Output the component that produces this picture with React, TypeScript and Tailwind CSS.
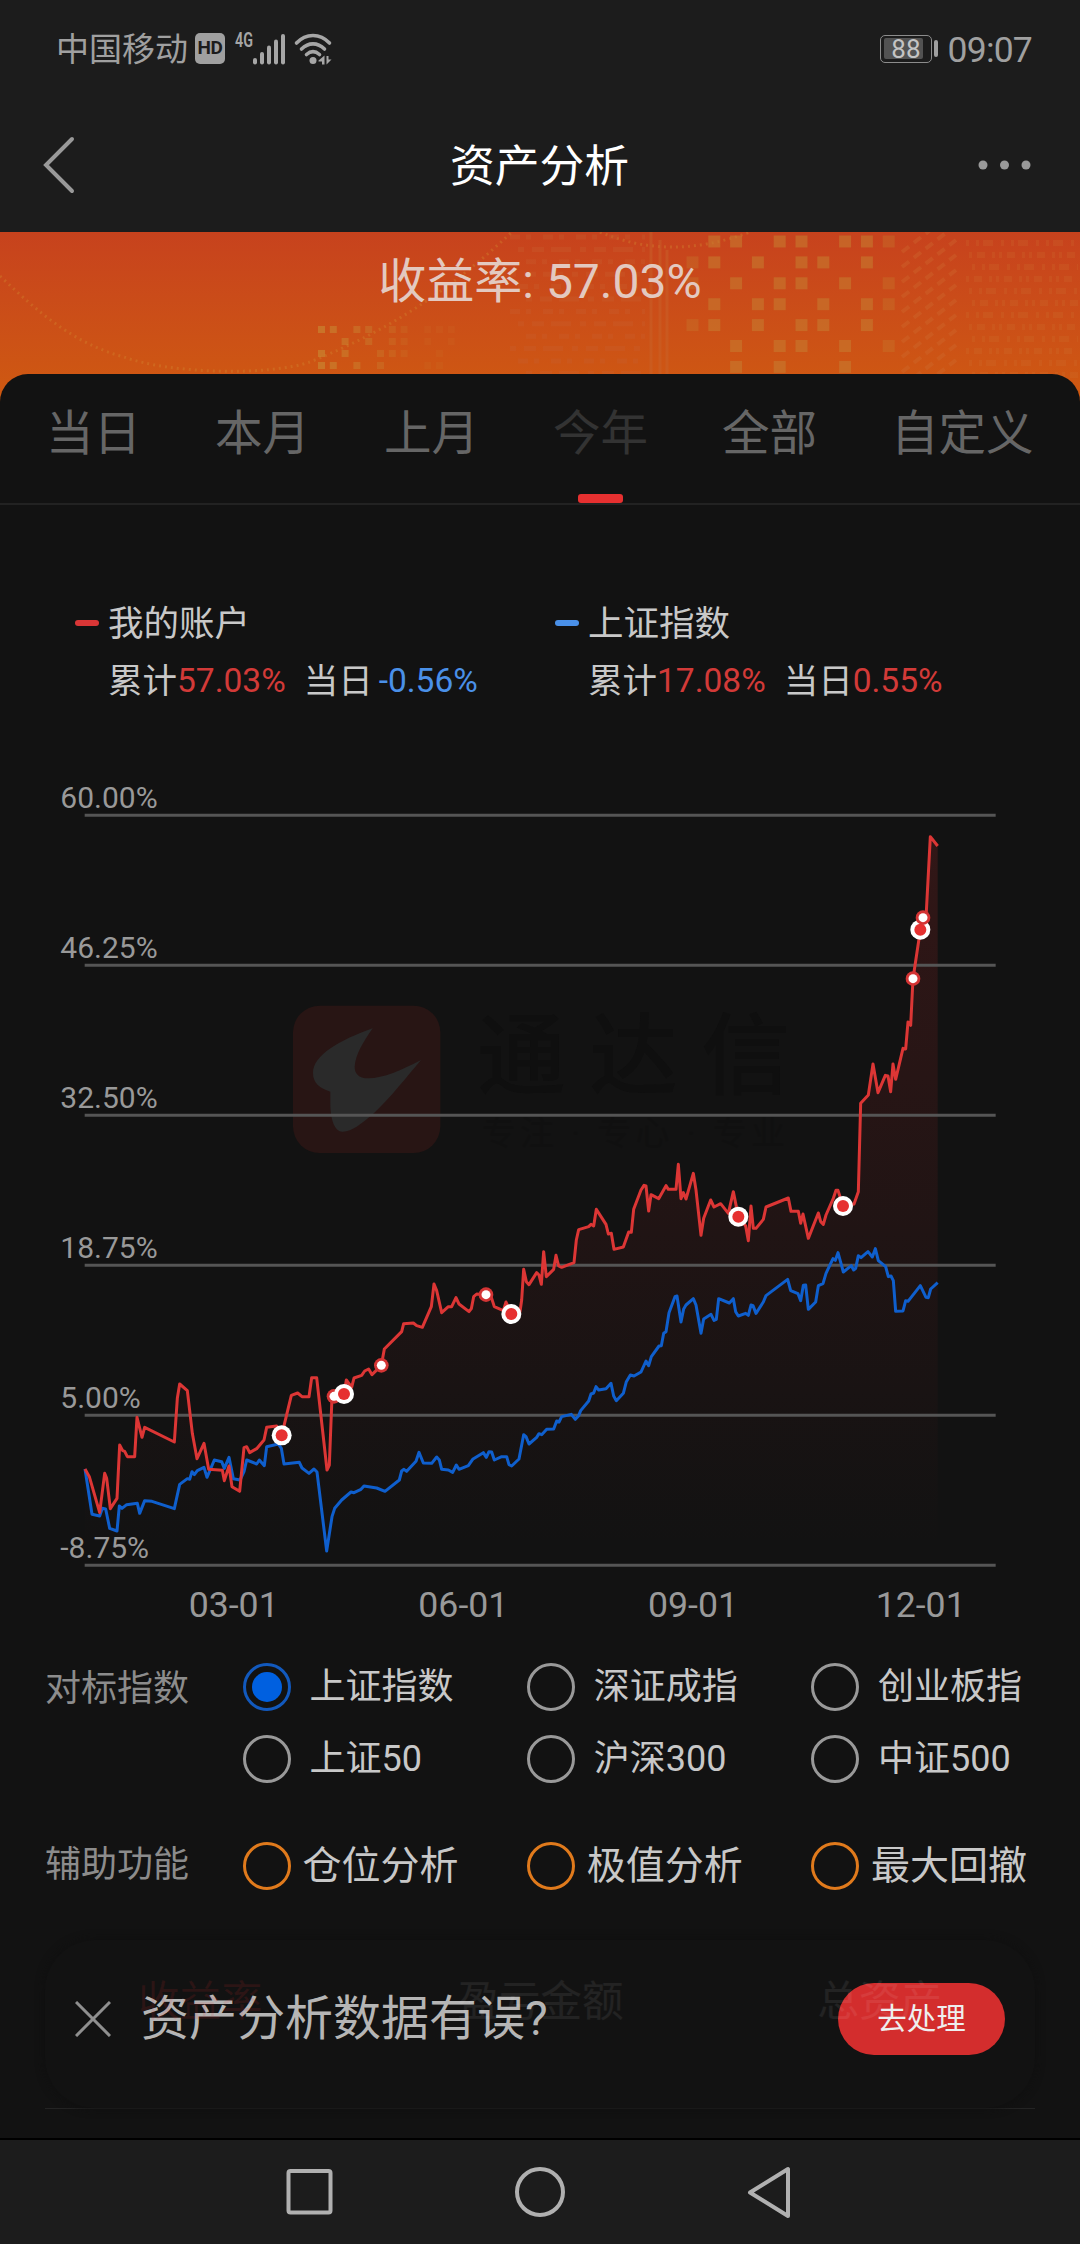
import clsx from 'clsx';

const tabs = ['当日', '本月', '上月', '今年', '全部', '自定义'];

const legends = [
  { name: '我的账户', dash: 'bg-[#d93636]', total: '57.03%', day: '-0.56%', dayClass: 'ml-[6px] text-[#4a90e8]' },
  { name: '上证指数', dash: 'bg-[#4a90e8]', total: '17.08%', day: '0.55%', dayClass: 'text-[#d23a38]' },
];

const indexRows = [
  ['上证指数', '深证成指', '创业板指'],
  ['上证50', '沪深300', '中证500'],
];

const helpers = ['仓位分析', '极值分析', '最大回撤'];

const gridLines = [
  { y: 46, label: '60.00%' },
  { y: 496, label: '46.25%' },
  { y: 946, label: '32.50%' },
  { y: 1396, label: '18.75%' },
  { y: 1846, label: '5.00%' },
  { y: 2296, label: '-8.75%' },
];

const dates = [
  { x: 701, label: '03-01' },
  { x: 1390, label: '06-01' },
  { x: 2079, label: '09-01' },
  { x: 2762, label: '12-01' },
];

// three units per css pixel
const account =
  '255,2007 268,2030 299,2138 314,2020 320,2035 331,2126 351,2095 359,1935 368,1952 374,1954 382,1970 404,1970 411,1852 426,1912 434,1882 523,1926 532,1795 539,1752 562,1772 577,1900 591,1976 612,1930 626,2008 667,2011 673,2042 687,1998 696,2060 719,2074 732,1943 740,1940 749,1958 770,1946 792,1920 800,1882 830,1878 845,1906 874,1786 893,1779 906,1790 927,1790 935,1733 950,1733 981,2010 988,1995 996,1790 1032,1782 1039,1740 1055,1762 1062,1734 1085,1726 1094,1713 1106,1707 1116,1724 1144,1696 1153,1647 1205,1595 1211,1571 1240,1569 1250,1577 1267,1582 1294,1520 1302,1452 1310,1472 1325,1538 1345,1520 1355,1520 1368,1493 1377,1512 1407,1535 1414,1526 1421,1490 1430,1482 1458,1484 1475,1495 1483,1520 1510,1532 1518,1506 1534,1542 1560,1535 1565,1500 1571,1408 1579,1445 1587,1454 1610,1418 1617,1425 1624,1453 1631,1355 1639,1430 1661,1408 1668,1366 1676,1398 1685,1402 1722,1388 1729,1320 1736,1289 1766,1280 1773,1273 1781,1278 1789,1228 1818,1273 1825,1302 1834,1300 1842,1348 1870,1341 1886,1296 1894,1297 1901,1228 1923,1170 1932,1156 1938,1158 1946,1233 1953,1184 1976,1196 1998,1157 2005,1168 2028,1168 2035,1093 2043,1196 2050,1178 2058,1197 2080,1120 2088,1170 2103,1306 2111,1255 2132,1200 2142,1221 2162,1211 2185,1240 2200,1175 2215,1250 2237,1278 2245,1322 2253,1218 2260,1285 2268,1285 2290,1258 2298,1221 2365,1194 2373,1234 2395,1234 2402,1270 2409,1242 2425,1315 2455,1239 2462,1265 2470,1273 2478,1245 2500,1195 2508,1171 2514,1171 2529,1218 2562,1212 2575,1175 2582,910 2605,885 2619,792 2634,878 2656,826 2664,828 2672,875 2679,792 2687,838 2709,745 2717,747 2724,666 2732,676 2739,536 2761,390 2769,353 2779,335 2791,110 2813,138';

const benchmark =
  '255,2007 276,2143 299,2148 307,2125 317,2127 329,2185 351,2193 358,2118 366,2125 380,2114 412,2110 419,2140 434,2102 456,2104 523,2126 539,2053 562,2036 569,2038 576,2015 583,2024 592,2012 612,2002 621,2032 643,1980 665,1985 673,2005 687,1972 700,2036 720,2040 732,2015 740,1980 770,1992 778,1980 793,1997 800,1940 835,1932 844,1945 852,1992 898,1987 906,2004 927,2020 942,2007 951,2016 980,2253 996,2150 1004,2125 1025,2100 1053,2076 1062,2078 1083,2068 1092,2058 1130,2064 1155,2074 1198,2040 1205,2013 1212,2008 1220,2014 1248,1984 1257,1957 1270,1989 1295,1990 1310,1971 1318,1980 1325,2008 1345,2010 1358,2017 1369,1995 1377,2008 1405,1997 1418,1978 1450,1958 1459,1972 1467,1955 1475,1956 1483,1980 1505,1970 1520,1970 1527,1994 1535,1998 1557,1977 1571,1904 1578,1910 1587,1932 1610,1912 1617,1901 1625,1904 1640,1888 1661,1887 1670,1863 1677,1866 1685,1850 1714,1843 1726,1858 1736,1847 1742,1832 1766,1803 1773,1782 1781,1779 1788,1760 1796,1770 1818,1766 1833,1750 1841,1788 1849,1802 1870,1780 1879,1745 1891,1725 1902,1728 1923,1716 1938,1683 1946,1697 1954,1670 1977,1638 1984,1637 1991,1600 1998,1595 2007,1538 2025,1490 2031,1488 2043,1566 2051,1527 2058,1515 2080,1496 2088,1515 2103,1600 2111,1557 2133,1543 2142,1561 2149,1558 2156,1496 2188,1509 2200,1496 2207,1535 2215,1548 2237,1540 2245,1546 2253,1515 2259,1517 2268,1540 2290,1506 2298,1487 2363,1438 2372,1472 2394,1481 2402,1502 2410,1456 2417,1455 2425,1528 2447,1506 2455,1457 2469,1451 2478,1420 2499,1376 2506,1381 2514,1358 2530,1416 2554,1397 2561,1410 2567,1405 2575,1367 2583,1373 2604,1355 2617,1371 2626,1346 2635,1382 2657,1400 2665,1430 2673,1428 2680,1442 2687,1534 2709,1533 2717,1502 2724,1504 2761,1457 2778,1492 2785,1493 2792,1467 2813,1448';

const marks = [
  { x: 845, y: 1906, big: true },
  { x: 1002, y: 1789, big: false },
  { x: 1032, y: 1782, big: true },
  { x: 1144, y: 1696, big: false },
  { x: 1458, y: 1484, big: false },
  { x: 1534, y: 1542, big: true },
  { x: 2215, y: 1250, big: true },
  { x: 2529, y: 1218, big: true },
  { x: 2739, y: 536, big: false },
  { x: 2761, y: 389, big: true },
  { x: 2769, y: 353, big: false },
];

const bigSquares = [
  [1, 2, 4, 5, 7, 8, 9],
  [0, 1, 3, 5, 6, 8],
  [0, 2, 4, 5, 7, 9],
  [1, 3, 4, 6, 8, 9],
  [0, 1, 3, 5, 6, 8],
  [2, 4, 5, 7, 9],
  [2, 4, 7],
];

const smallSquares = [
  [0, 1, 3, 4, 6, 7, 9, 10, 11],
  [2, 4, 6, 7, 9, 11],
  [0, 2, 5, 6, 7, 10],
  [0, 1, 3, 5, 9, 10],
];

const range = (n: number) => Array.from({ length: n }, (_, i) => i);

function StatusBar(): JSX.Element {
  return (
    <div className="flex h-[97px] items-center px-[56px] text-[#a0a0a0]">
      <span className="pt-[2px] text-[33px] leading-[48px]">中国移动</span>
      <span className="ml-[7px] flex h-[31px] w-[30px] items-center justify-center rounded-[5px] bg-[#a0a0a0] text-[19px] font-bold tracking-tight text-[#1c1c1c]">
        HD
      </span>
      <svg className="ml-[10px] overflow-visible" width="98" height="34" viewBox="0 0 98 34" fill="#a6a6a6">
        <text x="0" y="15" fontSize="20" fontWeight="600" textLength="18" lengthAdjust="spacingAndGlyphs">
          4G
        </text>
        <rect x="18" y="26" width="4" height="6.500" rx="2" />
        <rect x="25" y="20" width="4" height="12.500" rx="2" />
        <rect x="32" y="13.500" width="4" height="19" rx="2" />
        <rect x="39" y="7.500" width="4" height="25" rx="2" />
        <rect x="46" y="2" width="4" height="30.500" rx="2" />
        <g fill="none" stroke="#a6a6a6" strokeWidth="3.600" strokeLinecap="round">
          <path d="M61.500 11C71 .9 85 .9 94.500 11" />
          <path d="M66.500 17C73.500 10.200 82.500 10.200 89.500 17" />
          <path d="M71.500 22.500C75.800 18.800 80.200 18.800 84.500 22.500" />
        </g>
        <circle cx="78" cy="28.500" r="3.500" />
        <path d="M83.500 28.500 89.500 23.500V32.500H87V29.500H83.500Z" />
        <path d="M91.500 24V32.500L96.500 27.500H93.500V24Z" />
      </svg>
      <div className="ml-auto flex items-center">
        <div className="flex h-[28px] w-[52px] items-center rounded-[5px] border-[1.5px] border-[#8c8c8c] px-[3px]">
          <span className="flex h-[21px] w-[39px] items-center justify-end rounded-xs bg-[#525252] pr-[2px] text-[26px] leading-none text-[#c4c4c4]">
            88
          </span>
        </div>
        <span className="ml-[2px] h-[17px] w-[4px] rounded-full bg-[#a0a0a0]" />
        <span className="-mr-[8px] ml-[10px] pt-[2px] text-[35.500px] leading-[48px] tracking-[-0.8px]">09:07</span>
      </div>
    </div>
  );
}

function TitleBar(): JSX.Element {
  return (
    <header className="flex h-[135px] items-center justify-between pr-[48px] pl-[41px]">
      <svg width="60" height="60" viewBox="0 0 60 60" fill="none" stroke="#999" strokeWidth="4" strokeLinecap="round">
        <path d="M31 4 5 30 31 56" />
      </svg>
      <h1 className="pt-[4px] text-[44.800px] leading-[60px] text-white">资产分析</h1>
      <svg width="54" height="12" viewBox="0 0 54 12" fill="#999">
        <circle cx="5" cy="6" r="4.500" />
        <circle cx="26.500" cy="6" r="4.500" />
        <circle cx="48" cy="6" r="4.500" />
      </svg>
    </header>
  );
}

function Banner(): JSX.Element {
  return (
    <div className="relative h-[172px] bg-gradient-to-b from-[#c7421d] to-[#cf5a10]">
      <svg className="absolute inset-0" width="1080" height="172" viewBox="0 0 1080 172">
        <g fill="none" stroke="#d2822e" strokeWidth="3" strokeDasharray="2 4" opacity=".4">
          <path d="M0 44C40 82 75 112 124 125C170 142 270 144 310 130C390 98 450 58 512 0" />
          <path d="M600 0Q670 30 750 0" />
        </g>
        <g fill="#c8953a">
          {smallSquares.map((cols, row) =>
            cols.map((c) => (
              <rect key={`${row}-${c}`} x={318 + c * 11.8} y={94 + row * 12} width="7" height="7" opacity={c < 8 ? 0.5 - c * 0.05 : 0.08} />
            )),
          )}
        </g>
        <g fill="#c77a2e">
          {bigSquares.map((cols, row) =>
            cols.map((c) => (
              <rect
                key={`${row}-${c}`}
                x={686.5 + c * 21.8}
                y={3.5 + row * 20.9}
                width="12"
                height="12"
                opacity={c === 0 || c === 9 ? 0.35 : 0.6}
              />
            )),
          )}
        </g>
        <g stroke="#c9642c" strokeWidth="3" opacity=".45">
          <path d="M651 0V172M660 8V172M667 18V172" />
        </g>
        <g stroke="#c96030" strokeWidth="5" opacity=".3">
          {range(12).map((i) => (
            <path key={i} strokeDasharray={i % 2 ? '6 8 12 7 20 9' : '10 6 5 12'} d={`M${510 + (i % 3) * 8} ${5 + i * 12.4}H645`} />
          ))}
        </g>
        <g stroke="#d07034" strokeWidth="4" strokeDasharray="9 6" opacity=".3">
          {range(13).map((i) => (
            <path key={i} d={`M902 ${20 + i * 15} 956 ${-22 + i * 15}`} />
          ))}
        </g>
        <g stroke="#cf7a36" strokeWidth="6" opacity=".18">
          {range(13).map((i) => (
            <path key={i} strokeDasharray={i % 2 ? '3 5 8 7 3 4' : '3 7 3 4 10 8'} d={`M${966 + (i % 3) * 3} ${11 + i * 12}H1078`} />
          ))}
        </g>
      </svg>
      <div className="relative pt-[16px] text-center text-[48px] leading-[68px] text-[#e3c9c0]">收益率: 57.03%</div>
    </div>
  );
}

function Tabs(): JSX.Element {
  return (
    <nav className="flex h-[131px] gap-[74px] border-b-2 border-[#222] pt-[30px] pl-[46px]">
      {tabs.map((tab) => (
        <div key={tab} className="flex shrink-0 flex-col items-center">
          <span className={clsx('text-[47.500px] leading-[60px]', tab === '今年' ? 'text-[#333]' : 'text-[#666]')}>{tab}</span>
          {tab === '今年' && <span className="mt-[30px] h-[9px] w-[45px] rounded-[3px] bg-[#e63030]" />}
        </div>
      ))}
    </nav>
  );
}

function Legend(): JSX.Element {
  return (
    <div className="flex pt-[94px] pl-[75px] text-[#c8c8c8]">
      {legends.map((item) => (
        <div key={item.name} className="w-[480px]">
          <div className="flex items-center">
            <span className={clsx('-mt-[3px] h-[6px] w-[24px] rounded-[3px]', item.dash)} />
            <span className="ml-[9px] text-[35.500px] leading-[50px]">{item.name}</span>
          </div>
          <div className="mt-[7px] flex pl-[33px] text-[34.500px] leading-[50px]">
            <span>累计</span>
            <span className="text-[33.500px] text-[#d23a38]">{item.total}</span>
            <span className="ml-[18px]">当日</span>
            <span className={clsx('text-[33.500px]', item.dayClass)}>{item.day}</span>
          </div>
        </div>
      ))}
    </div>
  );
}

function Chart(): JSX.Element {
  return (
    <svg className="mt-[74px] block" width="1080" height="850" viewBox="0 -60 3240 2550">
      <defs>
        <linearGradient id="fill" gradientUnits="userSpaceOnUse" x1="0" y1="100" x2="0" y2="2250">
          <stop offset="0" stopColor="#e63030" stopOpacity=".15" />
          <stop offset="1" stopColor="#e63030" stopOpacity="0" />
        </linearGradient>
      </defs>
      <g>
        <rect x="879" y="617" width="442" height="442" rx="80" fill="#281514" />
        <path
          d="M1118 685C1020 720 939 765 939 819C939 850 960 865 991 875V909C991 950 1000 994 1027 995C1055 996 1085 970 1116 945C1175 890 1220 830 1263 780C1205 810 1150 835 1105 835C1075 835 1064 820 1064 800C1066 765 1090 725 1118 685Z"
          fill="#2a2a2a"
        />
        <text x="1432" y="860" fontSize="266" fontWeight="500" letterSpacing="70" fill="#0f0f0f">
          通达信
        </text>
        <text x="1445" y="1035" fontSize="102" textLength="910" fill="#101010">
          专注 · 专心 · 专业
        </text>
      </g>
      <g fill="#999" fontSize="90">
        {gridLines.map((line) => (
          <text key={line.label} x="181" y={line.y - 22}>
            {line.label}
          </text>
        ))}
      </g>
      <polygon points={`255,2296 ${account} 2813,2296`} fill="url(#fill)" />
      <g stroke="#555" strokeWidth="9">
        {gridLines.map((line) => (
          <path key={line.y} d={`M254 ${line.y}H2987`} />
        ))}
      </g>
      <g fill="none" strokeWidth="9" strokeLinejoin="round">
        <polyline points={benchmark} stroke="#0f5fcd" />
        <polyline points={account} stroke="#dc3635" />
      </g>
      {marks.map((mark) => (
        <g key={mark.x}>
          <circle cx={mark.x} cy={mark.y} r={mark.big ? 30 : 22} fill={mark.big ? '#fff' : '#d43434'} />
          <circle cx={mark.x} cy={mark.y} r={mark.big ? 18 : 13.5} fill={mark.big ? '#e63030' : '#fff'} />
        </g>
      ))}
      <g fill="#999" fontSize="107" textAnchor="middle">
        {dates.map((date) => (
          <text key={date.label} x={date.x} y="2451">
            {date.label}
          </text>
        ))}
      </g>
    </svg>
  );
}

function Options(): JSX.Element {
  return (
    <div className="mt-[33px] text-[#c8c8c8]">
      {indexRows.map((row, i) => (
        <div key={row[0]} className="mb-[24px] flex h-[48px] items-center pl-[45px] text-[36px] leading-[48px]">
          <span className="w-[197.500px] shrink-0 pt-[4px] text-[#8c8c8c]">{i === 0 && '对标指数'}</span>
          {row.map((name) => (
            <div key={name} className="flex w-[284.300px] shrink-0 items-center">
              <span
                className={clsx(
                  'flex size-[48px] items-center justify-center rounded-full border-[3px]',
                  name === '上证指数' ? 'border-[#1259bd]' : 'border-[#999]',
                )}
              >
                {name === '上证指数' && <i className="size-[30px] rounded-full bg-[#0060e0]" />}
              </span>
              <span className="ml-[19px] whitespace-nowrap">{name}</span>
            </div>
          ))}
        </div>
      ))}
      <div className="mt-[59px] flex h-[48px] items-center pl-[45px] leading-[48px]">
        <span className="-mt-[2px] w-[197.500px] shrink-0 text-[36px] text-[#8c8c8c]">辅助功能</span>
        {helpers.map((name) => (
          <div key={name} className="flex w-[284.300px] shrink-0 items-center">
            <span className="size-[48px] rounded-full border-[3px] border-[#e07a1c]" />
            <span className="ml-[12px] text-[39px] whitespace-nowrap">{name}</span>
          </div>
        ))}
      </div>
    </div>
  );
}

function Bottom(): JSX.Element {
  return (
    <div className="relative h-[248px] px-[45px] pt-[50px]">
      <div className="pointer-events-none relative z-10 flex h-[168px] items-start rounded-[50px] pt-[34px] text-[41.500px] leading-[56px] text-white/7 shadow-[0_0_10px_#0f0f0f]">
        <span className="ml-[93px] text-[#e63030]/12">收益率</span>
        <span className="ml-[195px]">盈亏金额</span>
        <span className="ml-[194px]">总资产</span>
      </div>
      <div className="h-px bg-[#242424]" />
      <div className="absolute inset-x-0 top-[93px] flex h-[72px] items-center pr-[75px] pl-[75px]">
        <svg width="36" height="36" viewBox="0 0 36 36" fill="none" stroke="#8f8f8f" strokeWidth="3">
          <path d="M1 1 35 35M35 1 1 35" />
        </svg>
        <span className="ml-[30px] text-[48px] leading-[72px] text-[#b5b5b5]">资产分析数据有误?</span>
        <button className="ml-auto h-[72px] w-[167px] rounded-full bg-[#d32d2d] text-[29.500px] leading-[40px] text-[#eee]">
          去处理
        </button>
      </div>
    </div>
  );
}

function SystemNav(): JSX.Element {
  return (
    <div className="flex h-[106px] items-center justify-center border-t-2 border-black bg-[#1c1c1c]">
      <svg width="520" height="60" viewBox="0 0 520 60" fill="none" stroke="#b0b0b0" strokeWidth="4" strokeLinejoin="round">
        <rect x="8.500" y="9" width="42" height="41.500" rx="2" />
        <circle cx="260" cy="30" r="23" />
        <path d="M508 7V54L470 30.500Z" />
      </svg>
    </div>
  );
}

function App(): JSX.Element {
  return (
    <div className="h-[2244px] w-[1080px] overflow-hidden bg-[#1c1c1c] font-['Roboto','Noto_Sans_CJK_SC',sans-serif]">
      <StatusBar />
      <TitleBar />
      <Banner />
      <main className="relative -mt-[30px] h-[1764px] rounded-t-[28px] bg-[#121212]">
        <Tabs />
        <Legend />
        <Chart />
        <Options />
        <Bottom />
      </main>
      <SystemNav />
    </div>
  );
}

export default App;
